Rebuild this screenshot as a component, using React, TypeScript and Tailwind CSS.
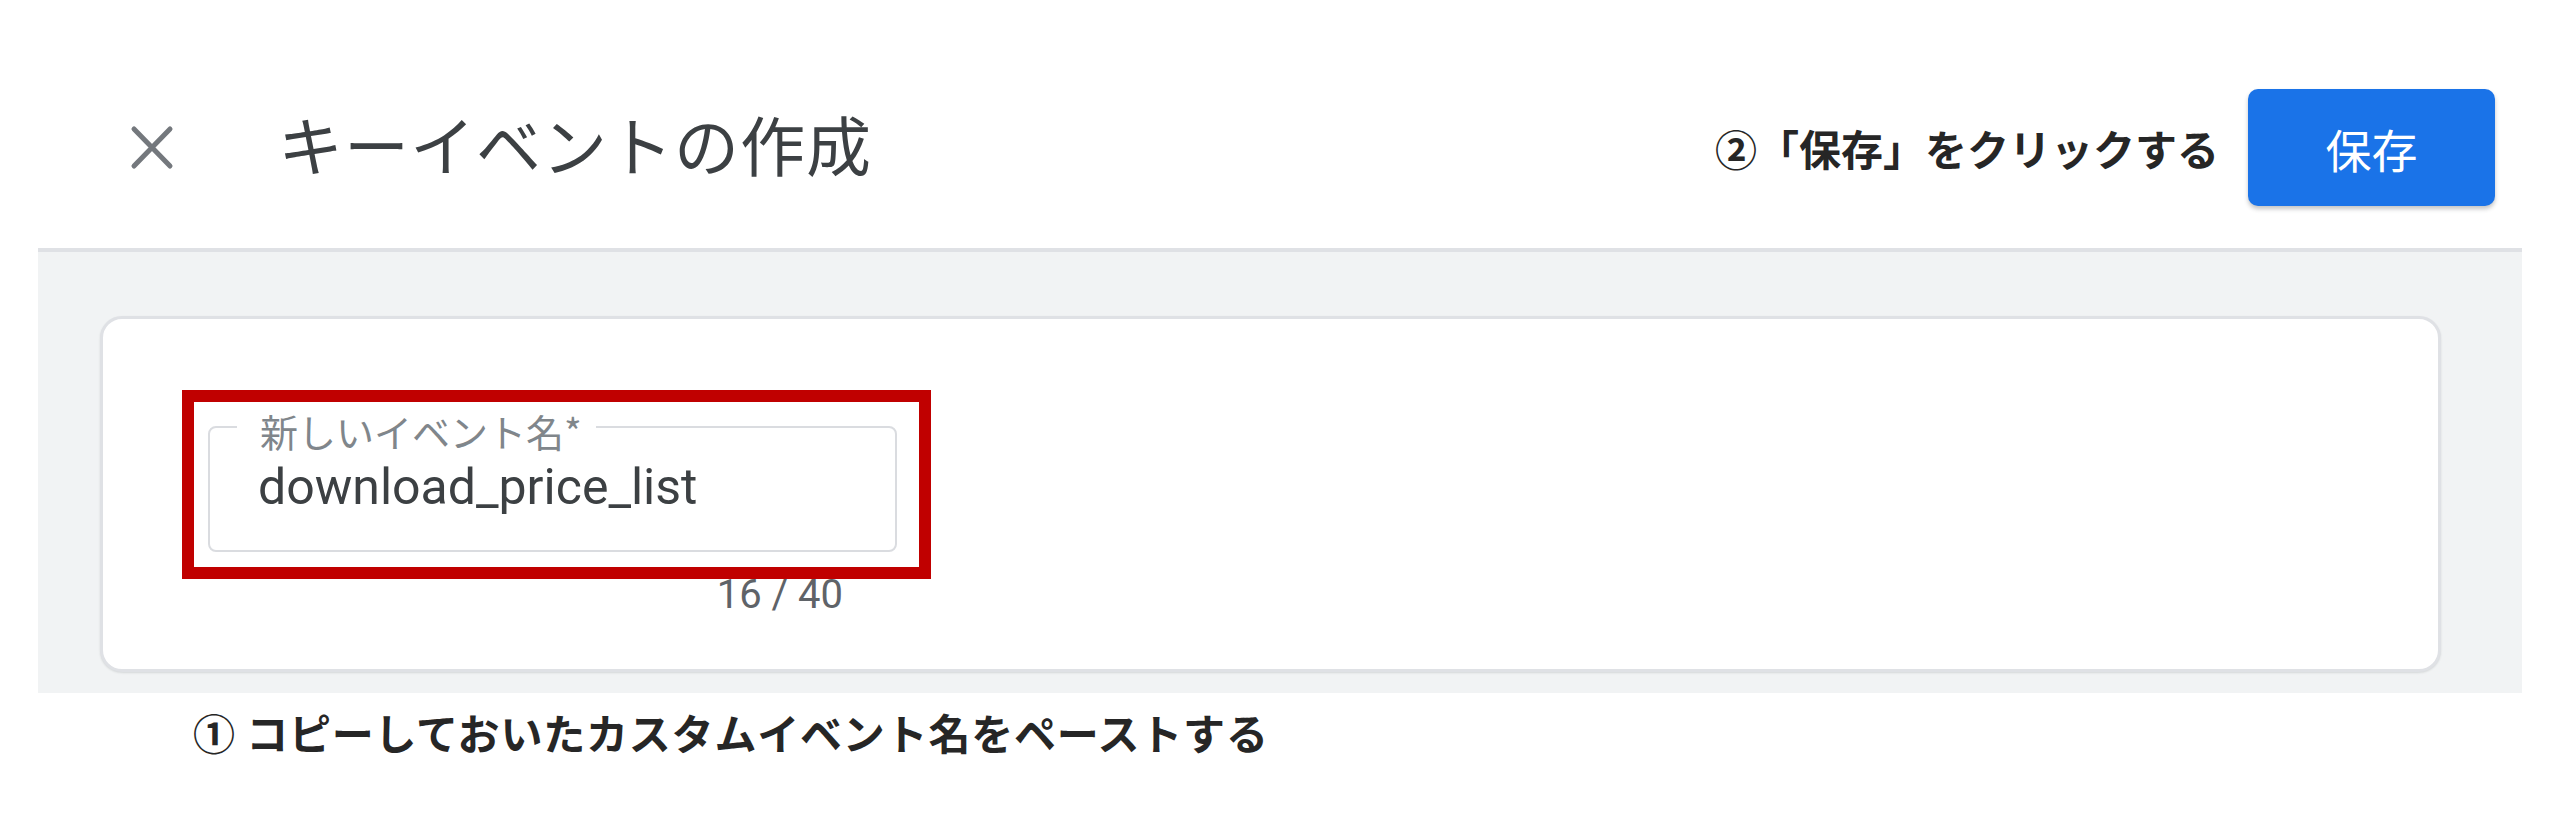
import React from "react";

const cjk = { fontFamily: '"Noto Sans CJK JP", "Noto Sans", sans-serif' };
const roboto = { fontFamily: 'Roboto, "Noto Sans CJK JP", sans-serif' };

export default function App() {
  return (
    <div className="w-[2560px] h-[823px] bg-white overflow-hidden" style={cjk}>
      <div className="ml-[38px] w-[2484px]">
        {/* Header */}
        <div className="h-[252px] border-b-[4px] border-[#dfe1e5] pt-[89px] pl-[92px] pr-[27px]">
          <div className="flex items-center h-[117px]">
            <svg width="44" height="45" viewBox="0 0 44 45" className="shrink-0">
              <path d="M4 4 L40 41 M40 4 L4 41" stroke="#74787d" strokeWidth="5" strokeLinecap="round" fill="none" />
            </svg>
            <div className="ml-[104px] mb-[9px] text-[65px] leading-[65px] tracking-[1px] text-[#3c4043] font-normal whitespace-nowrap">
              キーイベントの作成
            </div>
            <div className="ml-auto text-[42px] leading-[42px] font-bold text-[#262626] whitespace-nowrap">
              ②「保存」をクリックする
            </div>
            <button className="ml-[29px] w-[247px] h-[117px] rounded-[10px] bg-[#1a73e8] text-white text-[46px] leading-[46px] font-normal shadow-[0_3px_4px_rgba(60,64,67,0.3)] flex items-center justify-center">
              保存
            </button>
          </div>
        </div>

        {/* Gray content area */}
        <div className="h-[441px] bg-[#f1f3f4] pt-[64px] pl-[62px] pr-[81px]">
          <div className="relative h-[356px] rounded-[22px] border-[3px] border-[#dfe1e5] bg-white shadow-[0_1px_2px_rgba(60,64,67,0.15)]">
            <div className="pl-[105px] pt-[107px]">
              <div className="relative w-[689px] h-[126px] rounded-[8px] border-2 border-[#dadce0]">
                <span className="absolute top-[-16px] left-[27px] pl-[23px] pr-[14px] bg-white text-[38px] leading-[38px] text-[#80868b] whitespace-nowrap">
                  新しいイベント名*
                </span>
                <div className="pl-[48px] pt-[34px] text-[50px] leading-[50px] text-[#3c4043]" style={roboto}>
                  download_price_list
                </div>
              </div>
              <div className="w-[689px] mt-[23px] pr-[54px] text-right text-[40px] leading-[40px] text-[#5f6368]" style={roboto}>
                16 / 40
              </div>
            </div>
            <div className="absolute left-[79px] top-[71px] w-[749px] h-[189px] border-[12px] border-[#c00000] pointer-events-none" />
          </div>
        </div>

        {/* Bottom annotation */}
        <div className="mt-[18px] pl-[155px] text-[42px] leading-[42px] tracking-[0.8px] font-bold text-[#262626] whitespace-nowrap">
          ① コピーしておいたカスタムイベント名をペーストする
        </div>
      </div>
    </div>
  );
}
